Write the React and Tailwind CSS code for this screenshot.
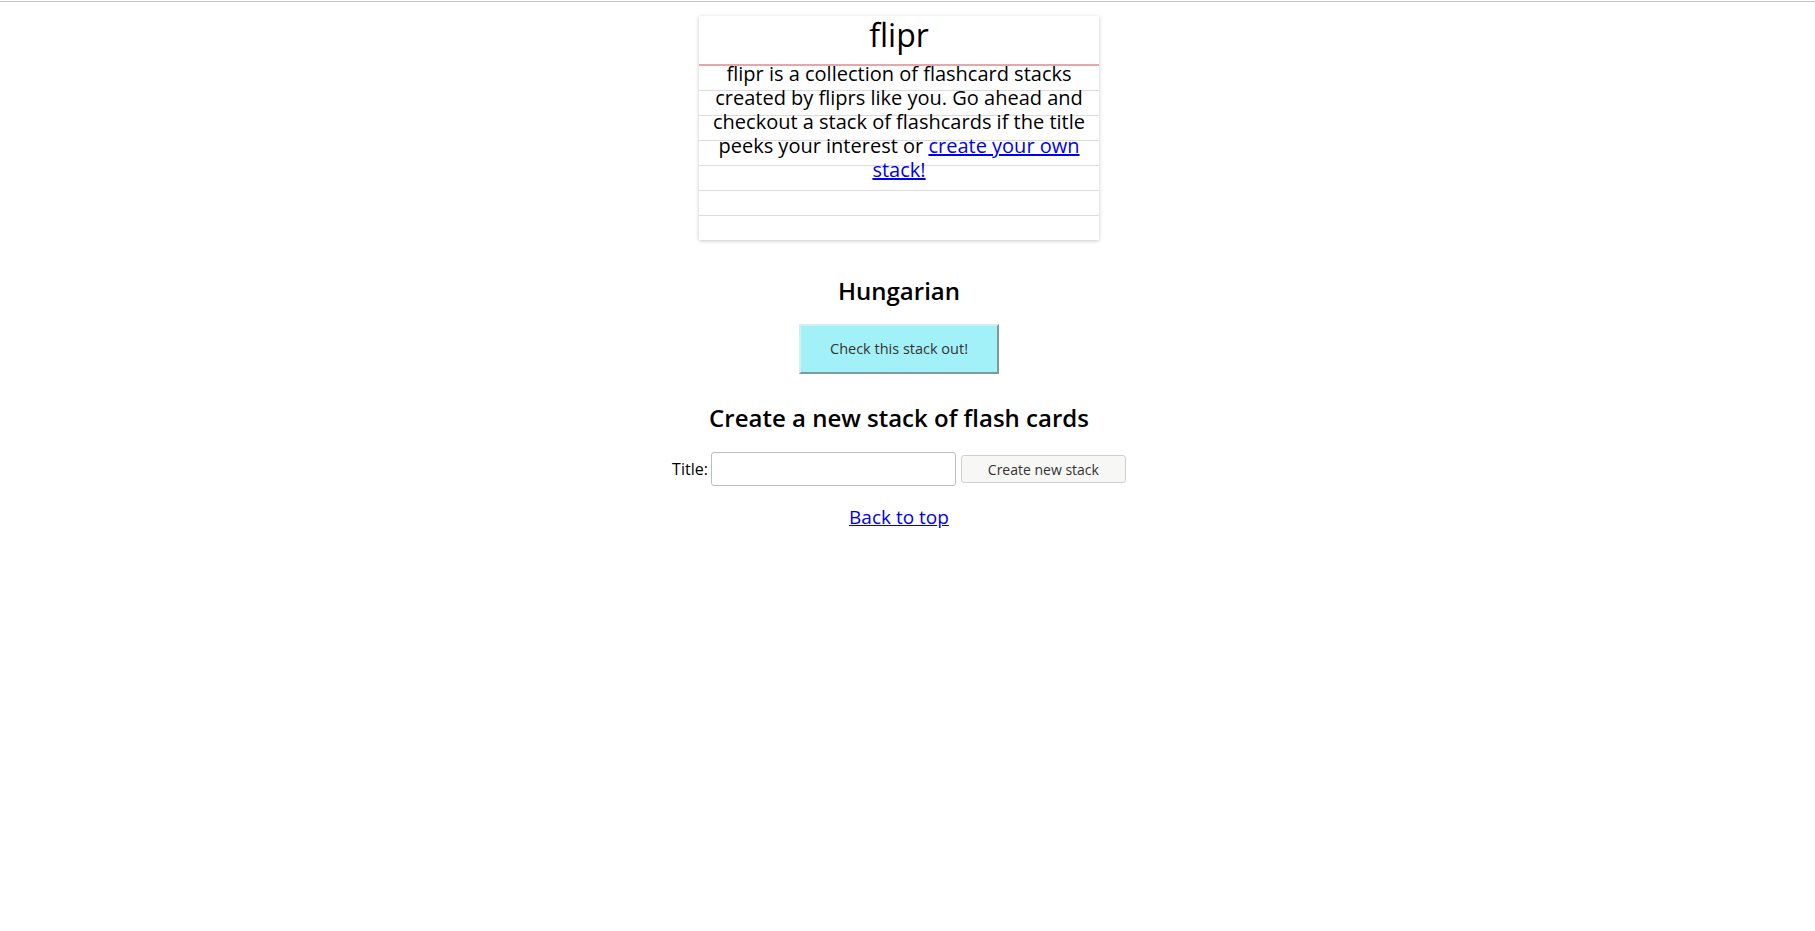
import React from "react";

export default function App() {
  const lines = [0, 1, 2, 3, 4, 5, 6];
  return (
    <div className="min-h-[931px] bg-white text-black" style={{ fontFamily: '"Open Sans", sans-serif' }}>
      <div className="h-[2px] border-b border-[#c6c6c6] bg-white" />
      <div className="flex flex-col items-center pr-[17px]">
        <div className="mt-[14px] w-[400px] bg-white shadow-[0_1px_4px_rgba(0,0,0,0.22)]">
          <div className="h-[51px] border-b-2 border-[#e5a7a7] text-center">
            <h1 className="-mt-[1px] text-[32px] leading-[40px]">flipr</h1>
          </div>
          <div className="relative">
            <div className="flex flex-col">
              {lines.map((i) => (
                <div key={i} className={i < 6 ? "h-[25px] border-b border-[#dcdcdc]" : "h-[24px]"} />
              ))}
            </div>
            <p className="absolute inset-x-0 top-[-4px] px-2 text-center text-[20px] leading-[24px]">
              flipr is a collection of flashcard stacks created by fliprs like you. Go ahead and checkout a stack of flashcards if the title peeks your interest or{" "}
              <a href="#" className="text-[#0000ee] underline">create your own stack!</a>
            </p>
          </div>
        </div>

        <h2 className="mt-[36px] text-[24px] font-semibold leading-[30px]">Hungarian</h2>
        <button className="mt-[18px] h-[50px] w-[200px] border-2 border-t-[#d4eef0] border-l-[#d4eef0] border-b-[#7f9a9c] border-r-[#7f9a9c] bg-[#a3f1f8] text-[14.5px] text-[#333]">
          Check this stack out!
        </button>

        <h2 className="mt-[29px] text-[24px] font-semibold leading-[30px]">Create a new stack of flash cards</h2>
        <div className="mt-[19px] flex items-center gap-[3px]">
          <label className="text-[16px]">Title:</label>
          <input className="h-[34px] w-[245px] rounded-[3px] border border-[#bdbdbd] bg-white px-2" />
          <button className="ml-[2px] h-[28px] w-[165px] rounded-[3px] border border-[#cfcfcf] bg-[#f7f7f5] text-[14px] text-[#333]">
            Create new stack
          </button>
        </div>

        <a href="#" className="mt-[17px] text-[19px] text-[#0000ee] underline">Back to top</a>
      </div>
    </div>
  );
}
